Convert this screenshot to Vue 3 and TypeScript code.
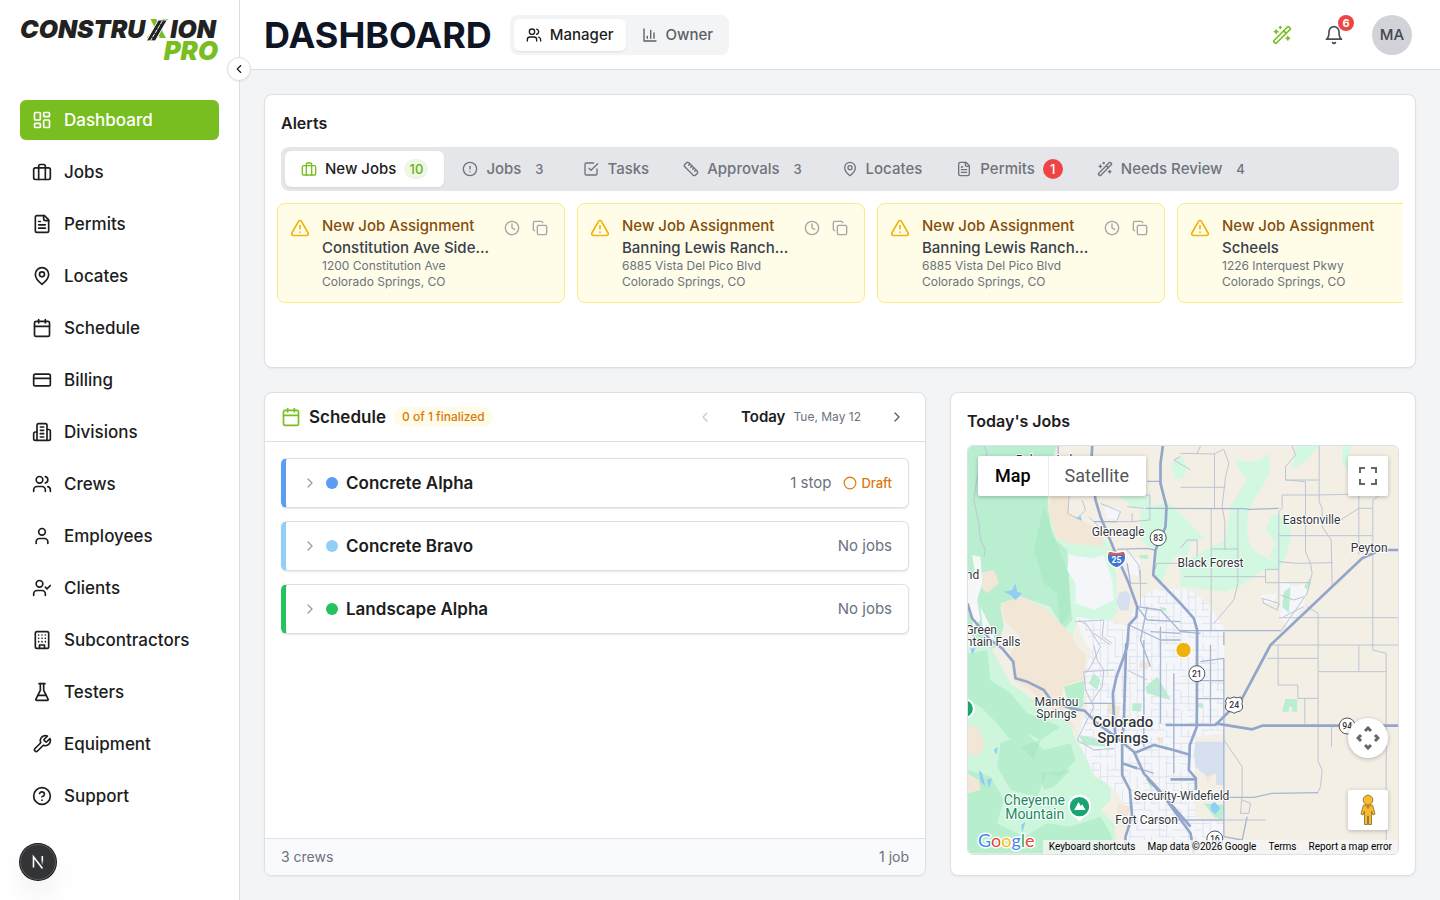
<script setup lang="ts">
import { ref } from 'vue'

const icons: Record<string, string> = {
  dashboard: '<rect width="7" height="9" x="3" y="3" rx="1"/><rect width="7" height="5" x="14" y="3" rx="1"/><rect width="7" height="9" x="14" y="12" rx="1"/><rect width="7" height="5" x="3" y="16" rx="1"/>',
  briefcase: '<rect width="20" height="14" x="2" y="7" rx="2"/><path d="M16 21V5a2 2 0 0 0-2-2h-4a2 2 0 0 0-2 2v16"/>',
  file: '<path d="M15 2H6a2 2 0 0 0-2 2v16a2 2 0 0 0 2 2h12a2 2 0 0 0 2-2V7Z"/><path d="M14 2v4a2 2 0 0 0 2 2h4"/><path d="M10 9H8"/><path d="M16 13H8"/><path d="M16 17H8"/>',
  pin: '<path d="M20 10c0 6-8 12-8 12s-8-6-8-12a8 8 0 0 1 16 0Z"/><circle cx="12" cy="10" r="3"/>',
  calendar: '<path d="M8 2v4"/><path d="M16 2v4"/><rect width="18" height="18" x="3" y="4" rx="2"/><path d="M3 10h18"/>',
  card: '<rect width="20" height="14" x="2" y="5" rx="2"/><path d="M2 10h20"/>',
  divisions: '<path d="M6 22V4a2 2 0 0 1 2-2h8a2 2 0 0 1 2 2v18Z"/><path d="M6 12H4a2 2 0 0 0-2 2v6a2 2 0 0 0 2 2h2"/><path d="M18 9h2a2 2 0 0 1 2 2v9a2 2 0 0 1-2 2h-2"/><path d="M10 6h4"/><path d="M10 10h4"/><path d="M10 14h4"/><path d="M10 18h4"/>',
  users: '<path d="M16 21v-2a4 4 0 0 0-4-4H6a4 4 0 0 0-4 4v2"/><circle cx="9" cy="7" r="4"/><path d="M22 21v-2a4 4 0 0 0-3-3.87"/><path d="M16 3.13a4 4 0 0 1 0 7.75"/>',
  user: '<path d="M19 21v-2a4 4 0 0 0-4-4H9a4 4 0 0 0-4 4v2"/><circle cx="12" cy="7" r="4"/>',
  userCheck: '<path d="m16 11 2 2 4-4"/><path d="M16 21v-2a4 4 0 0 0-4-4H6a4 4 0 0 0-4 4v2"/><circle cx="9" cy="7" r="4"/>',
  building: '<rect width="16" height="20" x="4" y="2" rx="2"/><path d="M9 22v-4h6v4"/><path d="M8 6h.01M12 6h.01M16 6h.01M8 10h.01M12 10h.01M16 10h.01M8 14h.01M12 14h.01M16 14h.01"/>',
  flask: '<path d="M10 2v7.527a2 2 0 0 1-.211.896L4.72 20.55a1 1 0 0 0 .9 1.45h12.76a1 1 0 0 0 .9-1.45l-5.069-10.127A2 2 0 0 1 14 9.527V2"/><path d="M8.5 2h7"/><path d="M7 16h10"/>',
  wrench: '<path d="M14.7 6.3a1 1 0 0 0 0 1.4l1.6 1.6a1 1 0 0 0 1.4 0l3.77-3.77a6 6 0 0 1-7.94 7.94l-6.91 6.91a2.12 2.12 0 0 1-3-3l6.91-6.91a6 6 0 0 1 7.94-7.94l-3.76 3.76z"/>',
  help: '<circle cx="12" cy="12" r="10"/><path d="M9.09 9a3 3 0 0 1 5.83 1c0 2-3 3-3 3"/><path d="M12 17h.01"/>',
  wand: '<path d="m21.64 3.64-1.28-1.28a1.21 1.21 0 0 0-1.72 0L2.36 18.64a1.21 1.21 0 0 0 0 1.72l1.28 1.28a1.2 1.2 0 0 0 1.72 0L21.64 5.36a1.2 1.2 0 0 0 0-1.72"/><path d="m14 7 3 3"/><path d="M5 6v4"/><path d="M19 14v4"/><path d="M10 2v2"/><path d="M7 8H3"/><path d="M21 16h-4"/><path d="M11 3H9"/>',
  bell: '<path d="M6 8a6 6 0 0 1 12 0c0 7 3 9 3 9H3s3-2 3-9"/><path d="M10.3 21a1.94 1.94 0 0 0 3.4 0"/>',
  chart: '<path d="M3 3v18h18"/><path d="M18 17V9"/><path d="M13 17V5"/><path d="M8 17v-3"/>',
  alert: '<circle cx="12" cy="12" r="10"/><path d="M12 8v4"/><path d="M12 16h.01"/>',
  check: '<path d="m9 11 3 3L22 4"/><path d="M21 12v7a2 2 0 0 1-2 2H5a2 2 0 0 1-2-2V5a2 2 0 0 1 2-2h11"/>',
  ruler: '<path d="M21.3 15.3a2.4 2.4 0 0 1 0 3.4l-2.6 2.6a2.4 2.4 0 0 1-3.4 0L2.7 8.7a2.41 2.41 0 0 1 0-3.4l2.6-2.6a2.41 2.41 0 0 1 3.4 0Z"/><path d="m14.5 12.5 2-2"/><path d="m11.5 9.5 2-2"/><path d="m8.5 6.5 2-2"/><path d="m17.5 15.5 2-2"/>',
  warning: '<path d="m21.73 18-8-14a2 2 0 0 0-3.48 0l-8 14A2 2 0 0 0 4 21h16a2 2 0 0 0 1.73-3"/><path d="M12 9v4"/><path d="M12 17h.01"/>',
  clock: '<circle cx="12" cy="12" r="10"/><path d="M12 6v6l4 2"/>',
  copy: '<rect width="14" height="14" x="8" y="8" rx="2"/><path d="M4 16c-1.1 0-2-.9-2-2V4c0-1.1.9-2 2-2h10c1.1 0 2 .9 2 2"/>',
  left: '<path d="m15 18-6-6 6-6"/>',
  right: '<path d="m9 18 6-6-6-6"/>',
  circle: '<circle cx="12" cy="12" r="10"/>',
}

interface NavItem { label: string; icon: string }
const nav: NavItem[] = [
  { label: 'Dashboard', icon: 'dashboard' },
  { label: 'Jobs', icon: 'briefcase' },
  { label: 'Permits', icon: 'file' },
  { label: 'Locates', icon: 'pin' },
  { label: 'Schedule', icon: 'calendar' },
  { label: 'Billing', icon: 'card' },
  { label: 'Divisions', icon: 'divisions' },
  { label: 'Crews', icon: 'users' },
  { label: 'Employees', icon: 'user' },
  { label: 'Clients', icon: 'userCheck' },
  { label: 'Subcontractors', icon: 'building' },
  { label: 'Testers', icon: 'flask' },
  { label: 'Equipment', icon: 'wrench' },
  { label: 'Support', icon: 'help' },
]
const activeNav = ref('Dashboard')

const views: NavItem[] = [
  { label: 'Manager', icon: 'users' },
  { label: 'Owner', icon: 'chart' },
]
const activeView = ref('Manager')

interface Tab extends NavItem { count?: number; tone?: string }
const tabs: Tab[] = [
  { label: 'New Jobs', icon: 'briefcase', count: 10, tone: 'green' },
  { label: 'Jobs', icon: 'alert', count: 3 },
  { label: 'Tasks', icon: 'check' },
  { label: 'Approvals', icon: 'ruler', count: 3 },
  { label: 'Locates', icon: 'pin' },
  { label: 'Permits', icon: 'file', count: 1, tone: 'red' },
  { label: 'Needs Review', icon: 'wand', count: 4 },
]
const activeTab = ref('New Jobs')

interface Alert { job: string; street: string }
const alerts: Alert[] = [
  { job: 'Constitution Ave Side...', street: '1200 Constitution Ave' },
  { job: 'Banning Lewis Ranch...', street: '6885 Vista Del Pico Blvd' },
  { job: 'Banning Lewis Ranch...', street: '6885 Vista Del Pico Blvd' },
  { job: 'Scheels', street: '1226 Interquest Pkwy' },
]

interface Crew { name: string; tone: string; status: string; draft?: boolean }
const crews: Crew[] = [
  { name: 'Concrete Alpha', tone: 'blue', status: '1 stop', draft: true },
  { name: 'Concrete Bravo', tone: 'sky', status: 'No jobs' },
  { name: 'Landscape Alpha', tone: 'green', status: 'No jobs' },
]

const mapTypes = ['Map', 'Satellite']
const activeMap = ref('Map')

interface Place { x: number; y: number; lines: string[]; size?: string }
const places: Place[] = [
  { x: 265, y: 71, lines: ['Palmer Lake'] },
  { x: 473, y: 289, lines: ['Gleneagle'] },
  { x: 750, y: 382, lines: ['Black Forest'] },
  { x: 1053, y: 253, lines: ['Eastonville'] },
  { x: 1226, y: 336, lines: ['Peyton'] },
  { x: 36, y: 417, lines: ['nd'] },
  { x: 62, y: 582, lines: ['Green'] },
  { x: 98, y: 618, lines: ['ntain Falls'] },
  { x: 288, y: 798, lines: ['Manitou', 'Springs'] },
  { x: 487, y: 862, lines: ['Colorado', 'Springs'], size: 'big' },
  { x: 663, y: 1081, lines: ['Security-Widefield'] },
  { x: 558, y: 1152, lines: ['Fort Carson'] },
]

/* Short street segments spread over the city area, from a fixed seed. */
function buildStreets(): string {
  let seed = 7
  const rand = () => {
    seed = (seed * 16807) % 2147483647
    return seed / 2147483647
  }
  let d = ''
  for (let y = 450; y < 1240; y += 20) {
    for (let x = 350; x < 790; x += 22) {
      const r = rand()
      const j = Math.round(rand() * 12 - 6)
      if (r < 0.62) d += `M${x} ${y}l22 ${Math.abs(j) < 3 ? j : 0}`
      if (r > 0.34) d += `M${x + 4} ${y}l${Math.abs(j) < 3 ? j : 0} 20`
    }
  }
  return d
}
const streets = buildStreets()
</script>

<template>
  <div class="shell">
    <aside class="sidebar">
      <svg class="logo" viewBox="0 0 200 44" role="img" aria-label="Construxion Pro">
        <text class="logo-dark" x="0" y="20">CONSTRU</text>
        <text class="logo-green logo-x" x="128" y="20">X</text>
        <path class="logo-road" d="M139 2h9l-12 21h-9z" />
        <path class="logo-line" d="M143 3 131 23" />
        <text class="logo-dark" x="197" y="20" text-anchor="end">ION</text>
        <text class="logo-green logo-pro" x="199" y="42" text-anchor="end">PRO</text>
      </svg>
      <button class="collapse" type="button" aria-label="Collapse sidebar">
        <svg class="icon s14" viewBox="0 0 24 24" v-html="icons.left" />
      </button>
      <nav class="nav" aria-label="Main">
        <a
          v-for="item in nav"
          :key="item.label"
          href="#"
          class="nav-link"
          :class="{ active: item.label === activeNav }"
          @click.prevent="activeNav = item.label"
        >
          <svg class="icon s20" viewBox="0 0 24 24" v-html="icons[item.icon]" />
          <span>{{ item.label }}</span>
        </a>
      </nav>
      <button class="dev" type="button" aria-label="Developer tools">
        <svg viewBox="0 0 36 36" width="36" height="36">
          <defs>
            <linearGradient id="nFade" x1="0" y1="0" x2="0" y2="1">
              <stop offset="0.4" stop-color="#fff" />
              <stop offset="1" stop-color="#fff" stop-opacity="0" />
            </linearGradient>
          </defs>
          <path d="M13.5 23.5V12.8L22.5 24.5" fill="none" stroke="#fff" stroke-width="1.6" />
          <rect x="21.5" y="12" width="1.6" height="9.5" fill="url(#nFade)" />
        </svg>
      </button>
    </aside>

    <div class="page">
      <header class="topbar">
        <h1>DASHBOARD</h1>
        <div class="switch">
          <button
            v-for="v in views"
            :key="v.label"
            type="button"
            class="switch-btn"
            :class="{ active: v.label === activeView }"
            @click="activeView = v.label"
          >
            <svg class="icon s16" viewBox="0 0 24 24" v-html="icons[v.icon]" />
            {{ v.label }}
          </button>
        </div>
        <div class="tools">
          <button class="tool wand" type="button" aria-label="Assistant">
            <svg class="icon s20" viewBox="0 0 24 24" v-html="icons.wand" />
          </button>
          <button class="tool" type="button" aria-label="Notifications">
            <svg class="icon s20" viewBox="0 0 24 24" v-html="icons.bell" />
            <span class="dot-count">6</span>
          </button>
          <button class="avatar" type="button">MA</button>
        </div>
      </header>

      <main class="content">
        <section class="panel alerts">
          <h2>Alerts</h2>
          <div class="tabs" role="tablist">
            <button
              v-for="t in tabs"
              :key="t.label"
              type="button"
              role="tab"
              class="tab"
              :class="{ active: t.label === activeTab }"
              :aria-selected="t.label === activeTab"
              @click="activeTab = t.label"
            >
              <svg class="icon s16" viewBox="0 0 24 24" v-html="icons[t.icon]" />
              {{ t.label }}
              <span v-if="t.count" class="count" :class="t.tone">{{ t.count }}</span>
            </button>
          </div>
          <div class="alert-row">
            <article v-for="(a, i) in alerts" :key="i" class="alert">
              <svg class="icon s20 warn" viewBox="0 0 24 24" v-html="icons.warning" />
              <div class="alert-body">
                <h3>New Job Assignment</h3>
                <p class="job">{{ a.job }}</p>
                <p class="addr">{{ a.street }}</p>
                <p class="addr">Colorado Springs, CO</p>
              </div>
              <div class="alert-actions">
                <button type="button" aria-label="Snooze"><svg class="icon s16" viewBox="0 0 24 24" v-html="icons.clock" /></button>
                <button type="button" aria-label="Copy"><svg class="icon s16" viewBox="0 0 24 24" v-html="icons.copy" /></button>
              </div>
            </article>
          </div>
        </section>

        <div class="lower">
          <section class="panel schedule">
            <header class="sched-head">
              <svg class="icon s20 green-icon" viewBox="0 0 24 24" v-html="icons.calendar" />
              <h2>Schedule</h2>
              <span class="pill">0 of 1 finalized</span>
              <div class="day-nav">
                <button type="button" disabled aria-label="Previous day"><svg class="icon s16" viewBox="0 0 24 24" v-html="icons.left" /></button>
                <div class="day"><strong>Today</strong><span>Tue, May 12</span></div>
                <button type="button" aria-label="Next day"><svg class="icon s16" viewBox="0 0 24 24" v-html="icons.right" /></button>
              </div>
            </header>
            <div class="crews">
              <button v-for="c in crews" :key="c.name" type="button" class="crew" :class="c.tone">
                <svg class="icon s16 chev" viewBox="0 0 24 24" v-html="icons.right" />
                <span class="bullet"></span>
                <span class="crew-name">{{ c.name }}</span>
                <span class="crew-status">{{ c.status }}</span>
                <span v-if="c.draft" class="draft">
                  <svg class="icon s14" viewBox="0 0 24 24" v-html="icons.circle" />Draft
                </span>
              </button>
            </div>
            <footer class="sched-foot"><span>3 crews</span><span>1 job</span></footer>
          </section>

          <section class="panel jobs">
            <h2>Today's Jobs</h2>
            <div class="map">
              <svg class="map-art" viewBox="21 18 1293 1224" preserveAspectRatio="xMidYMid slice">
                <defs>
                  <clipPath id="city">
                    <path d="M360 545 420 535 500 560 530 480 590 445 690 450 740 490 790 560V880L705 890V1130L790 1150V1240H480L515 1130 470 1060 400 1000 350 900 380 800 370 700 400 620Z" />
                  </clipPath>
                </defs>
                <rect x="0" y="0" width="1340" height="1260" fill="#f3efe5" />
                <!-- forest and parks -->
                <path fill="#d3f8e1" d="M262 190 300 290 440 300 465 345 470 520 430 560 350 530 330 620 250 560 200 480Z M470 165H570V200L520 205Z M540 210 620 185 660 220 720 285 735 292 690 310 680 350 650 345 620 380 600 440 575 400 580 330 540 300Z M630 70 665 48 680 85 668 115 645 120Z M825 55 850 65 900 60 922 40 930 85 912 130 880 180 862 220 860 280 870 320 905 345 950 370 925 345 915 300 912 240 945 220 985 240 992 280 980 340 955 390 900 395 855 430 795 455 660 440V370L795 300 810 200 860 120 830 80Z M1000 60 1005 18H1075L1040 60 995 90Z M1148 18H1170V90L1145 70Z" />
                <path fill="#b9efd0" d="M21 18H290L262 90 262 200 275 290 320 330 325 420 335 540 310 570 270 500 210 480 180 470 120 500 130 560 110 620 60 640 21 560Z" />
                <path fill="#cdf6dd" d="M21 615 90 620 150 730 220 780 330 850 345 900 370 930 400 1010 450 1030 450 1080 420 1110 460 1150 470 1240H21Z" />
                <path fill="#b7eecd" d="M21 640 80 630 90 720 150 760 200 820 300 860 240 900 200 880 150 900 100 840 60 800 21 780Z M120 910 200 880 250 930 330 910 345 960 300 1010 260 1000 230 1070 150 1050 110 980Z M21 990 90 1010 130 1080 110 1150 190 1190 260 1150 330 1160 420 1130 450 1180 465 1240H21Z M310 740 372 722 368 800 330 812Z" />
                <path fill="#a9e6c3" opacity=".6" d="M250 200 272 260 300 340 325 400 330 520 300 560 290 460 250 430 220 330Z M260 300 280 310 240 360Z M180 920 240 900 220 960Z M240 1000 330 990 280 1040 250 1050Z" />
                <path fill="#f2e7d6" d="M275 168H320L325 220 370 245 425 270 430 320 320 310 285 290 262 200Z M55 400 100 390 115 430 80 460 60 440Z M120 490 180 470 250 500 330 580 350 620 375 640 372 720 310 735 300 780 350 880 325 850 290 820 220 760 160 720 150 640 180 590 130 540Z M21 850 60 870 72 920 50 950 21 940Z M21 1000 55 1020 60 1050 21 1060Z" />
                <path fill="#f3efe5" d="M862 215 900 215 935 225 915 270 945 310 925 350 890 340 862 280Z M540 380 570 420 520 470 470 450 470 350Z" />
                <path fill="#f6f7f8" d="M35 345 60 350 65 430 50 480 60 540 40 560 21 480V420L45 410Z M60 500 90 560 110 620 70 590Z" />
                <!-- built-up areas -->
                <path fill="#f5f6f9" d="M325 345 400 355 430 345 455 420 460 480 400 510 345 490 345 430 320 390Z M360 545 420 535 500 560 530 480 590 445 690 450 740 490 790 560V880L705 890V1130L790 1150V1240H480L515 1130 470 1060 400 1000 350 900 380 800 370 700 400 620Z M430 200 480 205 470 240 440 235Z M500 340 540 360 535 410 505 400Z M960 420 1000 440 1040 430 1030 500 980 560 960 530Z M900 465 950 460 940 490 905 485Z M345 530 385 535 430 600 400 640 370 600Z" />
                <path fill="#f2e7d6" d="M440 790 480 800 475 830 440 820Z M470 1090 510 1100 500 1130 470 1120Z M540 660 570 670 560 690 535 680Z M730 970 760 1000 740 1030Z M585 895 610 890 605 915Z" />
                <path fill="#b9efd0" d="M555 740 590 710 620 760 630 780 560 760Z M515 790 545 790 540 815 515 812Z M355 885 430 900 435 920 370 915Z M400 700 420 720 410 750 385 730Z M560 1020 580 1025 570 1045Z M595 500 620 505 610 515Z M970 455 990 440 985 520 965 500Z M1030 440 1050 410 1045 450Z M965 815 975 777H1010V815H995V800H985V815Z M712 790 728 790 725 805 712 800Z M730 1090 790 1095 785 1140 760 1130Z M535 345 565 345 560 358 540 355Z" />
                <path fill="#d6e0ee" d="M705 905 790 905V1035H768L765 1000 740 1010 705 980 700 940Z M475 460 495 452 510 465 505 510 480 512 468 490Z" />
                <path fill="#91cef6" d="M130 455 155 450 165 430 170 455 185 460 165 480 150 465Z M345 235 360 228 365 242Z M55 990 65 1000 75 1040 60 1025Z M80 1020 95 1015 85 1045Z M100 930 112 920 108 945Z M750 1095 762 1085 780 1105 765 1122 752 1112Z M30 625 45 625 35 645Z M182 1155 195 1145 185 1180Z" />
                <!-- streets -->
                <path :d="streets" clip-path="url(#city)" fill="none" stroke="#d3dbe8" stroke-width="2" />
                <g class="minor">
                  <path d="M326 168 322 220 350 235 375 210 365 180 M410 245H515V220 M470 165H568V240L515 245 M500 200 550 205 M385 230 425 270 M420 190 480 215 470 240 M460 330 440 340 M660 40 760 42 790 28 805 70 795 110 785 200 793 245V330 M660 142H795 M762 42V205 M752 205V570 M832 205V430L820 480 760 550 M995 18 1005 45 975 80V120L1035 125V335L1050 370 1055 400 1040 460 960 575 M1076 18V185L1085 205 1085 260 1112 300 1115 435 M975 120H1076 M965 165H1076L1195 162V345 M965 165V205L955 215V500 M955 287H1237V180L1260 165 M1195 205H1237 M1195 205 1140 240 M955 365 1010 370 1115 368 M915 388H955 M915 388V428H1050 M670 410H915 M752 327H832 M1237 287V630L1277 640V1240 M1040 500 1073 520V965 M955 533H1314 M930 615H1314 M953 615V735H1012V775H1073 M920 655H1073 M1033 775V855 M1195 615V695 M1073 695H1277 M1073 965 1085 990 1080 1040 1070 1060 M790 900 845 980V1060 M845 1060 840 1120 865 1120 870 1090 845 1080 M790 1140H915 M660 325 680 300 710 300V350 M720 18 710 40 M1113 860V920 M905 475 955 490 950 510 910 490Z M960 465 1000 480 1030 470 M970 530 1030 500 M560 430 510 430 M650 370H590L578 400 M540 390V500 M500 330 535 375 540 430" />
                  <path d="M355 540 380 555 420 620 390 680 375 700 M345 545 430 540 425 590 455 610 M450 615 400 580 M70 18 80 40 50 110 40 180 55 250 60 300 75 330 70 350 M660 50 640 60 690 90" />
                  <path d="M370 695 460 690 M370 695 375 750 400 800 370 860 350 900 M400 615 410 660 430 690 425 740 390 790 M500 690 560 720 M350 900 400 930 460 925" />
                </g>
                <g class="arterial">
                  <path d="M293 18V60 M560 124 600 124 M400 245H470 M555 205 850 206 865 208 955 205 M470 328 560 325 583 330 M660 572H960 M570 575 660 580 M510 430 500 370 M530 500 600 510 660 575 720 580 M530 500 560 540 660 545 M505 555 600 600 660 600 M560 500 540 600 570 680 M720 665 790 655V900 M790 615V575 M709 722H790 M709 776H790 M750 615V850 M600 560V850 M640 700V1000 M550 600V920 M790 900V1190 M750 1072H810L880 1072 935 1060 1073 1058 M600 1070 750 1072 M455 790 370 790 M485 970 580 1000 M580 1140 790 1140 M790 1190 845 1200 860 1130" />
                </g>
                <g class="highway">
                  <path d="M395 18 392 80 405 180 420 230 470 350 505 430 530 500 528 530 505 555 500 620 490 650 468 710 457 760 460 830 465 890 520 935 550 1000 600 1055 690 1180 700 1240" />
                  <path d="M497 610 490 850 485 900V1005L508 1050 515 1130 495 1190V1240" />
                  <path d="M607 18 600 70 600 130 618 200 615 260 585 330 578 405 660 490 700 535 710 570 709 860 688 915 685 990 706 1015V1050" />
                  <path d="M1314 330H1260L1205 355 930 615 845 775 765 855H615" />
                  <path d="M765 850 875 868 905 857H1314" />
                  <path d="M21 490 35 535 90 600 125 625 158 665 165 715 200 725 250 750 275 785 330 805 372 812 410 850 465 890" />
                  <path d="M520 940 580 915 620 925 690 945 M560 1015 620 1080 690 1160 M630 1018H706 M485 970 530 985" />
                </g>
                <!-- labels -->
                <g class="places">
                  <text v-for="p in places" :key="p.lines[0]" :class="p.size" text-anchor="middle">
                    <tspan v-for="(l, i) in p.lines" :key="l" :x="p.x" :y="p.y + i * (p.size ? 46 : 36)">{{ l }}</tspan>
                  </text>
                  <text class="park" text-anchor="end"><tspan x="313" y="1095">Cheyenne</tspan><tspan x="311" y="1136">Mountain</tspan></text>
                </g>
                <!-- route shields -->
                <g class="shields">
                  <circle cx="593" cy="293" r="24" /><text x="593" y="302">83</text>
                  <circle cx="709" cy="701" r="24" /><text x="709" y="710">21</text>
                  <circle cx="1160" cy="858" r="24" /><text x="1160" y="867">94</text>
                  <circle cx="763" cy="1197" r="24" /><text x="763" y="1206">16</text>
                  <path d="M800 773q10 5 20 -2 10 5 20 0l6 12q-4 8 0 15 2 14-14 17-6 1-11 5-6-4-12-5-16-3-14-17 4-8 0-15Z" /><text x="821" y="804">24</text>
                </g>
                <path d="M445 333q22 8 46 0 8 18 2 32-8 14-25 19-17-5-25-19-6-14 2-32Z" fill="#3b78cf" stroke="#fff" stroke-width="4" />
                <path d="M446 335q22 8 44 0l3 10h-50Z" fill="#e8564c" />
                <text class="interstate" x="468" y="368">25</text>
                <!-- park pins -->
                <path d="M357 1144q-8-10-20-17a35 35 0 1 1 40 0q-12 7-20 17Z" fill="#fff" />
                <circle cx="357" cy="1100" r="29" fill="#17a673" />
                <path d="M341 1110 354 1086 361 1098 365 1093 375 1110Z" fill="#fff" />
                <circle cx="12" cy="806" r="31" fill="#fff" /><circle cx="12" cy="806" r="25" fill="#17a673" />
                <circle cx="669" cy="630" r="23" fill="#edb20b" stroke="#fff" stroke-width="3" />
              </svg>

              <div class="map-types">
                <button
                  v-for="m in mapTypes"
                  :key="m"
                  type="button"
                  :class="{ active: m === activeMap }"
                  @click="activeMap = m"
                >{{ m }}</button>
              </div>
              <button class="map-btn full" type="button" aria-label="Toggle fullscreen">
                <svg viewBox="0 0 18 18" width="18" height="18" fill="#666"><path d="M0 0v6h2V2h4V0zM12 0v2h4v4h2V0zM16 12v4h-4v2h6v-6zM2 12H0v6h6v-2H2z" /></svg>
              </button>
              <div class="map-side">
                <button class="map-btn pan" type="button" aria-label="Map camera controls">
                  <svg viewBox="0 0 24 24" width="24" height="24" fill="none" stroke="#666" stroke-width="3"><path d="m9 5 3-3 3 3M9 19l3 3 3-3M5 9l-3 3 3 3M19 9l3 3-3 3" /></svg>
                </button>
                <button class="map-btn" type="button" aria-label="Street View">
                  <svg viewBox="0 0 18 32" width="18" height="32" fill="#f8bb2c" stroke="#9a7b3c" stroke-width="1">
                    <path d="M4.5 11h9L16 20l-2 1-1.500-4v13.500h-3V22h-1v8.500h-3V17L4 21l-2-1Z" />
                    <circle cx="9" cy="6" r="4.8" />
                    <path d="M6 11.500h6L9 15.500Z" fill="#e07e1c" stroke="none" />
                  </svg>
                </button>
              </div>
              <div class="map-foot">
                <span class="google" aria-label="Google"><i class="b">G</i><i class="r">o</i><i class="y">o</i><i class="b">g</i><i class="g">l</i><i class="r">e</i></span>
                <div class="legal">
                  <button type="button">Keyboard shortcuts</button>
                  <span>Map data ©2026 Google</span>
                  <a href="#">Terms</a>
                  <a href="#">Report a map error</a>
                </div>
              </div>
            </div>
          </section>
        </div>
      </main>
    </div>
  </div>
</template>

<style>
body {
  margin: 0;
  background: #f3f4f6;
}
</style>

<style scoped>
* {
  box-sizing: border-box;
}
.shell {
  display: flex;
  min-height: 100vh;
  font-family: Inter, "Noto Sans", sans-serif;
  font-size: 15px;
  line-height: 20px;
  color: #1c1d21;
  background: #f3f4f6;
}
button {
  font: inherit;
  color: inherit;
  padding: 0;
  border: 0;
  background: none;
  cursor: pointer;
}
a {
  color: inherit;
  text-decoration: none;
}
h1, h2, h3, p {
  margin: 0;
}
h2 {
  font-size: 16px;
  font-weight: 600;
  line-height: 24px;
}
.icon {
  flex: none;
  display: block;
  fill: none;
  stroke: currentColor;
  stroke-width: 2;
  stroke-linecap: round;
  stroke-linejoin: round;
}
.s14 { width: 14px; height: 14px; }
.s16 { width: 16px; height: 16px; }
.s20 { width: 20px; height: 20px; }

/* Sidebar */
.sidebar {
  position: relative;
  z-index: 2;
  flex: none;
  width: 240px;
  padding: 18px 20px;
  background: #fff;
  border-right: 1px solid #dcdde1;
}
.logo {
  display: block;
  width: 100%;
  overflow: visible;
}
.logo text {
  font-size: 25px;
  font-weight: 900;
  font-style: italic;
}
.logo .logo-x,
.logo .logo-pro {
  font-size: 26px;
}
.logo-dark { fill: #222; }
.logo-green { fill: #78be20; }
.logo-road {
  fill: #222;
  stroke: #fff;
  stroke-width: 1;
}
.logo-line {
  fill: none;
  stroke: #fff;
  stroke-width: 1;
  stroke-dasharray: 4 1;
}
.collapse {
  position: absolute;
  top: 57px;
  right: -12px;
  display: grid;
  place-items: center;
  width: 24px;
  height: 24px;
  background: #fff;
  border: 1px solid #dcdde1;
  border-radius: 50%;
  box-shadow: 0 1px 2px rgba(0, 0, 0, 0.06);
}
.nav {
  display: flex;
  flex-direction: column;
  gap: 12px;
  margin-top: 38px;
}
.nav-link {
  display: flex;
  align-items: center;
  gap: 12px;
  height: 40px;
  padding: 0 12px;
  border-radius: 6px;
  font-size: 17px;
  font-weight: 500;
}
.nav-link.active {
  background: #78be20;
  color: #fff;
}
.dev {
  position: fixed;
  left: 20px;
  bottom: 20px;
  width: 36px;
  height: 36px;
  border-radius: 50%;
  background: #333436;
  box-shadow: 0 0 0 1px #161616, inset 0 0 0 1px #55565a, 0 16px 32px -8px rgba(0, 0, 0, 0.2);
}

/* Header */
.page {
  flex: 1;
  min-width: 0;
  display: flex;
  flex-direction: column;
}
.topbar {
  display: flex;
  align-items: center;
  height: 70px;
  padding: 0 28px 0 24px;
  background: #fff;
  border-bottom: 1px solid #dcdde1;
}
h1 {
  font-size: 36px;
  font-weight: 700;
  line-height: 40px;
  color: #0f1524;
}
.switch {
  display: flex;
  gap: 4px;
  margin-left: 18px;
  padding: 4px;
  border-radius: 8px;
  background: #f3f4f6;
}
.switch-btn {
  display: flex;
  align-items: center;
  gap: 8px;
  height: 32px;
  padding: 0 12px;
  border-radius: 6px;
  font-weight: 500;
  color: #5b5e66;
}
.switch-btn.active {
  background: #fff;
  color: #1c1d21;
  box-shadow: 0 1px 2px rgba(0, 0, 0, 0.08);
}
.tools {
  display: flex;
  align-items: center;
  gap: 12px;
  margin-left: auto;
}
.tool {
  position: relative;
  display: grid;
  place-items: center;
  width: 40px;
  height: 40px;
  color: #4b4e55;
}
.tool.wand {
  color: #78be20;
}
.dot-count {
  position: absolute;
  top: 0;
  right: 0;
  width: 16px;
  height: 16px;
  border-radius: 50%;
  background: #ef4444;
  color: #fff;
  font-size: 11px;
  font-weight: 700;
  line-height: 16px;
  text-align: center;
}
.avatar {
  width: 40px;
  height: 40px;
  margin-left: 6px;
  border-radius: 50%;
  background: #d1d3d8;
  color: #44474d;
  font-weight: 500;
}

/* Panels */
.content {
  flex: 1;
  display: flex;
  flex-direction: column;
  gap: 24px;
  padding: 24px;
}
.panel {
  background: #fff;
  border: 1px solid #dfe0e4;
  border-radius: 8px;
  box-shadow: 0 1px 2px rgba(0, 0, 0, 0.05);
}
.alerts {
  padding: 16px;
}
.tabs {
  display: flex;
  gap: 2px;
  margin-top: 12px;
  padding: 4px;
  border-radius: 8px;
  background: #e5e6ea;
}
.tab {
  display: flex;
  align-items: center;
  gap: 8px;
  height: 36px;
  padding: 0 16px;
  border-radius: 6px;
  font-weight: 500;
  color: #70737b;
}
.tab.active {
  background: #fff;
  color: #1c1d21;
  box-shadow: 0 1px 2px rgba(0, 0, 0, 0.08);
}
.tab.active .icon {
  color: #78be20;
}
.count {
  min-width: 20px;
  height: 20px;
  border-radius: 10px;
  font-size: 13px;
  text-align: center;
}
.count.green {
  min-width: 24px;
  background: #eef6e4;
  color: #6ab017;
}
.count.red {
  background: #ef4444;
  color: #fff;
}
.alert-row {
  display: flex;
  align-items: flex-start;
  gap: 12px;
  min-height: 148px;
  margin: 12px -4px 0;
  overflow: hidden;
}
.alert {
  flex: none;
  display: flex;
  gap: 12px;
  width: 288px;
  padding: 12px;
  background: #fffde8;
  border: 1px solid #fbea86;
  border-radius: 8px;
}
.warn {
  margin-top: 2px;
  color: #edb50c;
}
.alert-body {
  flex: 1;
  min-width: 0;
}
.alert h3 {
  margin-bottom: 2px;
  font-size: 15px;
  font-weight: 500;
  line-height: 20px;
  color: #854d0e;
}
.job {
  font-weight: 500;
  color: #3a3f4b;
  white-space: nowrap;
}
.addr {
  font-size: 12px;
  line-height: 16px;
  color: #6b7280;
}
.alert-actions {
  display: flex;
  align-items: flex-start;
  gap: 4px;
}
.alert-actions button {
  padding: 4px;
  color: #a3a5aa;
}

/* Lower row */
.lower {
  flex: 1;
  display: grid;
  grid-template-columns: repeat(12, minmax(0, 1fr));
  gap: 24px;
}
.schedule {
  grid-column: span 7;
  display: flex;
  flex-direction: column;
  overflow: hidden;
}
.sched-head {
  display: flex;
  align-items: center;
  gap: 8px;
  padding: 12px 16px;
  border-bottom: 1px solid #dfe0e4;
}
.sched-head h2 {
  font-size: 17px;
}
.green-icon {
  color: #78be20;
}
.pill {
  padding: 0 8px;
  border-radius: 10px;
  background: #fefce8;
  color: #d9780b;
  font-size: 12px;
  font-weight: 500;
}
.day-nav {
  display: flex;
  align-items: center;
  margin-left: auto;
}
.day-nav button {
  padding: 4px;
  color: #5b5e66;
}
.day-nav button:disabled {
  color: #c9cbd0;
}
.day {
  display: flex;
  align-items: center;
  justify-content: center;
  gap: 8px;
  width: 168px;
}
.day strong {
  font-weight: 600;
}
.day span {
  font-size: 12px;
  color: #6b7280;
}
.crews {
  flex: 1;
  display: flex;
  flex-direction: column;
  gap: 13px;
  padding: 16px;
}
.crew {
  --tone: #5b9cf5;
  display: flex;
  align-items: center;
  gap: 8px;
  height: 50px;
  padding: 0 16px;
  border: 1px solid #dfe0e4;
  border-left: 5px solid var(--tone);
  border-radius: 6px;
  background: #fff;
  box-shadow: 0 1px 2px rgba(0, 0, 0, 0.1);
}
.crew.sky { --tone: #93cef8; }
.crew.green { --tone: #25c35f; }
.chev {
  color: #9b9ea5;
}
.bullet {
  width: 12px;
  height: 12px;
  border-radius: 50%;
  background: var(--tone);
}
.crew-name {
  margin-right: auto;
  font-size: 17px;
  font-weight: 600;
}
.crew-status {
  color: #6b7280;
}
.draft {
  display: flex;
  align-items: center;
  gap: 4px;
  margin-left: 4px;
  color: #d9780b;
  font-size: 13px;
  font-weight: 500;
}
.sched-foot {
  display: flex;
  justify-content: space-between;
  padding: 8px 16px;
  border-top: 1px solid #dfe0e4;
  background: #f9fafb;
  color: #6b7280;
  font-size: 14px;
}
.jobs {
  grid-column: span 5;
  display: flex;
  flex-direction: column;
  gap: 12px;
  padding: 16px 16px 20px;
}

/* Map */
.map {
  position: relative;
  flex: 1;
  min-height: 400px;
  border: 1px solid #dfe0e4;
  border-radius: 6px;
  overflow: hidden;
  font-family: Roboto, sans-serif;
}
.map-art {
  position: absolute;
  inset: 0;
  width: 100%;
  height: 100%;
}
.minor, .arterial, .highway {
  fill: none;
  stroke-linejoin: round;
}
.minor {
  stroke: #bcc5d4;
  stroke-width: 3;
}
.arterial {
  stroke: #a6b6d3;
  stroke-width: 4;
}
.highway {
  stroke: #93a6c9;
  stroke-width: 8;
}
.places text {
  font-size: 36px;
  fill: #33373d;
  stroke: #fff;
  stroke-width: 6px;
  stroke-linejoin: round;
  paint-order: stroke;
}
.places text.big {
  font-size: 45px;
  font-weight: 500;
}
.places text.park {
  font-size: 42px;
  fill: #178a62;
}
.shields circle, .shields path {
  fill: #fff;
  stroke: #4f545c;
  stroke-width: 3;
}
.shields text {
  font-size: 26px;
  font-weight: 500;
  fill: #33373d;
  text-anchor: middle;
}
.interstate {
  font-size: 26px;
  font-weight: 700;
  fill: #fff;
  text-anchor: middle;
}
.map-types {
  position: absolute;
  top: 10px;
  left: 10px;
  display: flex;
  background: #fff;
  border-radius: 2px;
  box-shadow: 0 1px 4px rgba(0, 0, 0, 0.25);
}
.map-types button {
  height: 40px;
  padding: 0 17px;
  font-size: 18px;
  color: #565656;
}
.map-types button.active {
  box-shadow: 1px 0 0 #ececec;
  font-weight: 500;
  color: #000;
}
.map-btn {
  display: grid;
  place-items: center;
  width: 40px;
  height: 40px;
  background: #fff;
  border-radius: 2px;
  box-shadow: 0 1px 4px rgba(0, 0, 0, 0.25);
}
.map-btn.full {
  position: absolute;
  top: 10px;
  right: 10px;
}
.map-btn.pan {
  border-radius: 50%;
}
.map-side {
  position: absolute;
  right: 10px;
  bottom: 24px;
  display: flex;
  flex-direction: column;
  gap: 32px;
}
.map-foot {
  position: absolute;
  left: 10px;
  right: 0;
  bottom: 0;
  display: flex;
  align-items: flex-end;
  justify-content: space-between;
  white-space: nowrap;
}
.google {
  font-family: Lato, sans-serif;
  font-size: 18px;
  line-height: 28px;
  -webkit-text-stroke: 3px #fff;
  paint-order: stroke;
}
.google i {
  font-style: normal;
}
.google .b { color: #4285f4; }
.google .r { color: #ea4335; }
.google .y { color: #fbbc05; }
.google .g { color: #34a853; }
.legal {
  display: flex;
  gap: 12px;
  padding: 0 6px;
  background: rgba(245, 245, 245, 0.8);
  color: #000;
  font-size: 10px;
  line-height: 14px;
}
</style>
